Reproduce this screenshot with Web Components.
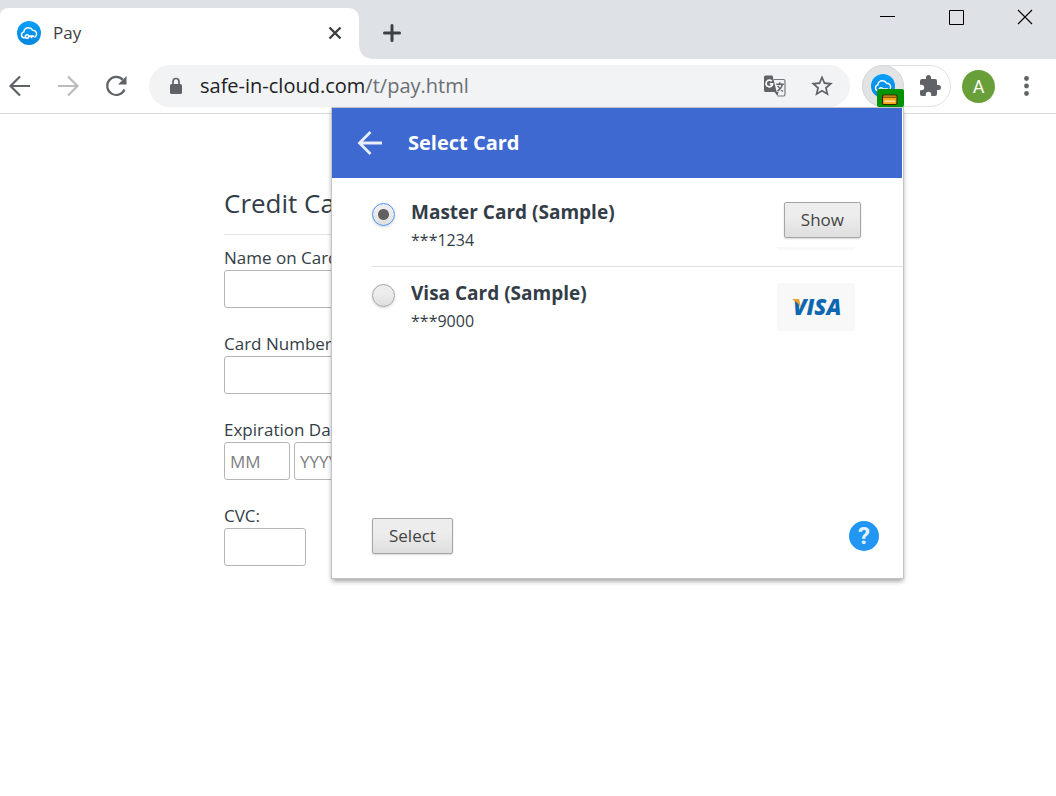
<!DOCTYPE html>
<html lang="en">
<head>
<meta charset="utf-8">
<title>Pay</title>
<style>
  body {
    margin: 0;
    background: #fff;
    color: #333d47;
    font-family: "Open Sans", "Noto Sans", sans-serif;
  }
</style>
</head>
<body>
<browser-window>
  <tab-strip slot="tabs" label="Pay"></tab-strip>
  <tool-bar slot="toolbar" host="safe-in-cloud.com" path="/t/pay.html"></tool-bar>
  <pay-form></pay-form>
  <card-popup slot="popup" heading="Select Card">
    <card-item name="Master Card (Sample)" number="***1234" active></card-item>
    <card-item name="Visa Card (Sample)" number="***9000" brand="visa"></card-item>
  </card-popup>
</browser-window>

<script>
const BASE = `
  * {
    box-sizing: border-box;
    margin: 0;
  }

  svg {
    display: block;
    flex: none;
  }

  button {
    padding: 0;
    border: none;
    background: none;
    color: inherit;
    font: inherit;
  }
`;

class BrowserWindow extends HTMLElement {
  constructor() {
    super();
    this.attachShadow({ mode: 'open' });
  }

  connectedCallback() {
    this.shadowRoot.innerHTML = `
      <style>
        ${BASE}
        :host {
          display: flex;
          flex-direction: column;
          position: relative;
          min-height: 100vh;
        }

        main {
          flex: 1;
        }

        slot[name="popup"]::slotted(*) {
          position: absolute;
          top: 108px;
          right: 153px;
        }
      </style>

      <slot name="tabs"></slot>
      <slot name="toolbar"></slot>
      <main><slot></slot></main>
      <slot name="popup"></slot>
    `;
  }
}

class CloudLogo extends HTMLElement {
  constructor() {
    super();
    this.attachShadow({ mode: 'open' });
  }

  connectedCallback() {
    this.shadowRoot.innerHTML = `
      <style>
        ${BASE}
        :host {
          display: block;
          width: 24px;
          height: 24px;
          flex: none;
        }
      </style>

      <svg width="24" height="24" viewBox="0 0 24 24" fill="none" stroke="#fff" stroke-linecap="round">
        <defs>
          <linearGradient id="sky" x2="0" y2="1">
            <stop stop-color="#08a0fa"/>
            <stop offset="1" stop-color="#0585dc"/>
          </linearGradient>
        </defs>
        <circle cx="12" cy="12" r="12" fill="url(#sky)" stroke="none"/>
        <path stroke-width="1.4" d="M7.200 16.800C5.600 16.600 4.500 15.400 4.500 13.900s1-2.700 2.400-3C7 8.400 9 6.700 11.300 6.700c1.900 0 3.500 1 4.200 2.600 2.400-.1 4.100 1.500 4.100 3.700 0 1.500-.7 2.600-1.700 3.200"/>
        <circle cx="10" cy="15.500" r="1.700" stroke-width="1.600"/>
        <path stroke-width="1.800" d="M12 15.200h4.500M14.500 15.600v.8"/>
      </svg>
    `;
  }
}

class TabStrip extends HTMLElement {
  constructor() {
    super();
    this.attachShadow({ mode: 'open' });
  }

  connectedCallback() {
    this.shadowRoot.innerHTML = `
      <style>
        ${BASE}
        :host {
          display: flex;
          justify-content: space-between;
          height: 59px;
          background: #dee1e6;
        }

        .tabs {
          display: flex;
          align-items: flex-end;
        }

        .tab {
          display: flex;
          align-items: center;
          gap: 12px;
          position: relative;
          width: 359px;
          height: 51px;
          padding: 0 15px 2px 17px;
          border-radius: 8px 10px 0 0;
          background: #fff;
        }

        .tab::after {
          content: "";
          position: absolute;
          left: 100%;
          bottom: 0;
          width: 12px;
          height: 12px;
          background: radial-gradient(circle at 100% 0, #dee1e6 11px, #fff 12px);
        }

        .title {
          flex: 1;
          color: #3c4043;
          font-size: 17px;
          line-height: 24px;
        }

        .add {
          margin: 0 0 14px 21px;
        }

        .window {
          display: flex;
          gap: 45px;
          padding: 5px 18px 0 0;
          align-items: flex-start;
        }
      </style>

      <div class="tabs">
        <div class="tab">
          <cloud-logo></cloud-logo>
          <span class="title">${this.getAttribute('label')}</span>
          <button aria-label="Close tab">
            <svg width="18" height="18" viewBox="0 0 18 18" stroke="#3c4043" stroke-width="2.400"><path d="M3.500 3.500l11 11M14.500 3.500l-11 11"/></svg>
          </button>
        </div>
        <button class="add" aria-label="New tab">
          <svg width="24" height="24" viewBox="0 0 24 24" stroke="#3c4043" stroke-width="3" stroke-linecap="round"><path d="M4.500 12h15M12 4.500v15"/></svg>
        </button>
      </div>
      <div class="window">
        <button aria-label="Minimize">
          <svg width="24" height="24" viewBox="0 0 24 24" stroke="#000"><path d="M4 11.500h15"/></svg>
        </button>
        <button aria-label="Maximize">
          <svg width="24" height="24" viewBox="0 0 24 24" fill="none" stroke="#000"><path d="M4.500 5.500h14v14h-14z"/></svg>
        </button>
        <button aria-label="Close">
          <svg width="24" height="24" viewBox="0 0 24 24" stroke="#000" stroke-width="1.100"><path d="M4 5l14 14M18 5l-14 14"/></svg>
        </button>
      </div>
    `;
  }
}

class ToolBar extends HTMLElement {
  constructor() {
    super();
    this.attachShadow({ mode: 'open' });
  }

  connectedCallback() {
    this.shadowRoot.innerHTML = `
      <style>
        ${BASE}
        :host {
          display: flex;
          align-items: center;
          box-sizing: border-box;
          height: 55px;
          padding: 0 18px 0 5px;
          border-bottom: 1px solid #d9dadc;
          background: #fff;
          color: #5f6368;
        }

        .nav {
          display: flex;
          gap: 18px;
          margin-right: 18px;
        }

        .nav [disabled] {
          color: #bbbcbe;
        }

        .address {
          display: flex;
          align-items: center;
          flex: 1;
          height: 42px;
          padding: 0 15px 0 20px;
          border-radius: 21px;
          background: #f1f3f4;
        }

        .url {
          flex: 1;
          margin-left: 17px;
          color: #6b6f74;
          font-size: 20px;
          line-height: 28px;
        }

        .url b {
          color: #202124;
          font-weight: 400;
        }

        .address button {
          margin-left: 22px;
        }

        .extensions {
          display: flex;
          align-items: center;
          gap: 14px;
          width: 89px;
          height: 42px;
          margin: 0 11px 0 12px;
          border: 1px solid #dfe1e4;
          border-radius: 21px;
        }

        .vault {
          display: grid;
          place-items: center;
          position: relative;
          width: 42px;
          height: 42px;
          margin-left: -1px;
          border: 1px solid #d6d7d9;
          border-radius: 50%;
          background: #e2e3e4;
        }

        .badge {
          position: absolute;
          right: -1px;
          bottom: -1px;
          border-radius: 2px;
        }

        .avatar {
          width: 33px;
          height: 33px;
          margin-right: 19px;
          border-radius: 50%;
          background: #689f38;
          color: #fff;
          font: 18px/33px Roboto, sans-serif;
        }
      </style>

      <div class="nav">
        <button aria-label="Back">
          <svg width="30" height="30" viewBox="0 0 30 30" fill="none" stroke="currentColor" stroke-width="2.200"><path d="M25 15H7M15 5.500L5.500 15l9.500 9.500"/></svg>
        </button>
        <button aria-label="Forward" disabled>
          <svg width="30" height="30" viewBox="0 0 30 30" fill="none" stroke="currentColor" stroke-width="2.200"><path d="M5 15h18M15 5.500l9.500 9.500-9.500 9.500"/></svg>
        </button>
        <button aria-label="Reload">
          <svg width="30" height="30" viewBox="0 0 30 30" fill="currentColor"><path d="M23.500 18.500A9 9 0 1 1 21.800 8.800" fill="none" stroke="currentColor" stroke-width="2.200"/><path d="M25.500 5v8.500H17z"/></svg>
        </button>
      </div>

      <div class="address">
        <svg width="14" height="18" viewBox="0 0 14 18" fill="#5f6368"><rect x="1" y="7" width="12" height="10" rx="1.500"/><path d="M4 8V4.500a3 3 0 0 1 6 0V8" fill="none" stroke="#5f6368" stroke-width="1.700"/></svg>
        <span class="url"><b>${this.getAttribute('host')}</b>${this.getAttribute('path')}</span>
        <button aria-label="Translate">
          <svg width="24" height="24" viewBox="0 0 24 24" fill="none">
            <path d="M11 5.500h9.500a1.500 1.500 0 0 1 1.500 1.500V20.500a1.500 1.500 0 0 1-1.500 1.500H14.500" stroke="#75797d" stroke-width="1.200"/>
            <path d="M2.500 1.500h7l4.200 16.500H2.500A1.500 1.500 0 0 1 1 16.500V3A1.500 1.500 0 0 1 2.500 1.500z" fill="#5f6368"/>
            <path d="M11.500 18l3 4 1-4z" fill="#5f6368"/>
            <path d="M8.800 7.300A3.300 3.300 0 1 0 9.600 9.800H6.800" stroke="#fff" stroke-width="1.700"/>
            <path d="M13.300 10.200h7.500M16.800 8.300v1.900M19.500 10.200c-.7 3-2.700 5.500-5 7M14.800 11.800c1 2 2.800 4.200 5.200 5.700" stroke="#5f6368" stroke-width="1.400"/>
          </svg>
        </button>
        <button aria-label="Bookmark">
          <svg width="26" height="26" viewBox="0 0 24 24" fill="currentColor"><path d="M22 9.240l-7.190-.62L12 2 9.190 8.630 2 9.240l5.460 4.730L5.820 21 12 17.270 18.180 21l-1.630-7.030L22 9.240zM12 15.400l-3.760 2.270 1-4.280-3.320-2.880 4.380-.38L12 6.100l1.710 4.040 4.380.38-3.320 2.880 1 4.280L12 15.400z"/></svg>
        </button>
      </div>

      <div class="extensions">
        <button class="vault" aria-label="Password manager">
          <cloud-logo></cloud-logo>
          <svg class="badge" width="27" height="18" viewBox="0 0 27 18">
            <path fill="#019301" d="M0 0h27v18H0z"/>
            <rect x="5.500" y="6" width="14.500" height="9.500" rx="1.500" fill="#f7a81b" stroke="#362406" stroke-width="1.200"/>
            <path fill="#8a5a10" d="M6 7.500h13.500v1.500H6z"/>
            <path fill="#fde4ab" d="M7.500 11.500h10.500v1.500H7.500z"/>
          </svg>
        </button>
        <button aria-label="Extensions">
          <svg width="24" height="24" viewBox="0 0 24 24" fill="currentColor"><path d="M20.500 11H19V7a2 2 0 0 0-2-2h-4V3.500a2.500 2.500 0 0 0-5 0V5H4a2 2 0 0 0-2 2v3.800h1.500a2.700 2.700 0 0 1 0 5.400H2V20a2 2 0 0 0 2 2h3.800v-1.500a2.700 2.700 0 0 1 5.400 0V22H17a2 2 0 0 0 2-2v-4h1.500a2.500 2.500 0 0 0 0-5z"/></svg>
        </button>
      </div>

      <button class="avatar" aria-label="Account">A</button>
      <button aria-label="Menu">
        <svg width="24" height="24" viewBox="0 0 24 24" fill="currentColor"><circle cx="12.500" cy="4.500" r="2.400"/><circle cx="12.500" cy="12" r="2.400"/><circle cx="12.500" cy="19.500" r="2.400"/></svg>
      </button>
    `;
  }
}

class PayForm extends HTMLElement {
  constructor() {
    super();
    this.attachShadow({ mode: 'open' });
  }

  connectedCallback() {
    this.shadowRoot.innerHTML = `
      <style>
        ${BASE}
        :host {
          display: block;
          max-width: 608px;
          margin: 70px auto 0;
        }

        h1 {
          padding-bottom: 12px;
          border-bottom: 1px solid #e3e3e3;
          font-size: 26px;
          font-weight: 400;
          line-height: 38px;
        }

        form {
          display: grid;
          gap: 24px;
          padding-top: 11px;
        }

        label {
          display: block;
          font-size: 17px;
          line-height: 24px;
        }

        input {
          display: block;
          width: 100%;
          height: 38px;
          padding: 0 5px;
          border: 1px solid #b5b5b5;
          border-radius: 3px;
          background: #fff;
          font: 17px/24px "Open Sans", "Noto Sans", sans-serif;
        }

        input::placeholder {
          color: #808080;
        }

        .date {
          display: flex;
          gap: 4px;
        }

        .date input {
          width: 66px;
        }

        #cvc {
          width: 82px;
        }
      </style>

      <h1>Credit Card</h1>
      <form>
        <div>
          <label for="name">Name on Card:</label>
          <input id="name" type="text">
        </div>
        <div>
          <label for="number">Card Number:</label>
          <input id="number" type="text">
        </div>
        <div>
          <label for="month">Expiration Date:</label>
          <div class="date">
            <input id="month" type="text" placeholder="MM">
            <input type="text" placeholder="YYYY" aria-label="Expiration year">
          </div>
        </div>
        <div>
          <label for="cvc">CVC:</label>
          <input id="cvc" type="text">
        </div>
      </form>
    `;
  }
}

class PushButton extends HTMLElement {
  constructor() {
    super();
    this.attachShadow({ mode: 'open' });
  }

  connectedCallback() {
    this.shadowRoot.innerHTML = `
      <style>
        ${BASE}
        :host {
          display: inline-block;
        }

        button {
          display: block;
          height: 36px;
          padding: 0 16px;
          border: 1px solid #a5a5a5;
          border-radius: 2px;
          background: linear-gradient(#ededed 38%, #dedede);
          box-shadow: 0 1px 2px rgba(0, 0, 0, 0.16);
          color: #444;
          font-size: 17px;
          line-height: 24px;
        }
      </style>

      <button type="button"><slot></slot></button>
    `;
  }
}

class CardItem extends HTMLElement {
  constructor() {
    super();
    this.attachShadow({ mode: 'open' });
  }

  get thumb() {
    if (this.getAttribute('brand') !== 'visa') {
      return '<div class="cover"><push-button>Show</push-button></div>';
    }
    return `
      <svg width="78" height="48" viewBox="0 0 78 48">
        <text x="16" y="32" fill="#0c67b0" font-size="22" font-weight="800" font-style="italic">VISA</text>
        <path fill="#f0a030" d="M15.500 16h6.500l2.200 9.500c-1.700-4-4.700-7-8.700-8.700z"/>
      </svg>
    `;
  }

  connectedCallback() {
    const active = this.hasAttribute('active');

    this.shadowRoot.innerHTML = `
      <style>
        ${BASE}
        :host {
          display: flex;
          align-items: flex-start;
          padding: 14px 48px 14px 0;
        }

        :host([active]) {
          padding-top: 22px;
          border-bottom: 1px solid #dfdfdf;
        }

        input {
          appearance: none;
          width: 23px;
          height: 23px;
          margin: 3px 16px 0 0;
          border: 1px solid #a5a5a5;
          border-radius: 50%;
          background: linear-gradient(#ededed 38%, #dedede);
          box-shadow: 0 1px 2px rgba(0, 0, 0, 0.16);
        }

        input:checked {
          border-color: #4d90fe;
          background: radial-gradient(circle, #616161 5px, transparent 6px), linear-gradient(#ededed 38%, #dedede);
        }

        label {
          flex: 1;
        }

        .name {
          display: block;
          font-size: 19px;
          font-weight: 700;
          line-height: 24px;
        }

        .number {
          display: block;
          padding-top: 4px;
          font-size: 16px;
          line-height: 24px;
        }

        .thumb {
          position: relative;
          width: 78px;
          height: 48px;
          margin-top: 2px;
          border-radius: 2px;
          background: #f8f8f8;
        }

        .cover {
          position: absolute;
          top: 0;
          right: -6px;
          display: flex;
          justify-content: flex-end;
          width: 84px;
          height: 45px;
          background: #fff;
        }
      </style>

      <input id="pick" type="radio" name="card" ${active ? 'checked' : ''}>
      <label for="pick">
        <span class="name">${this.getAttribute('name')}</span>
        <span class="number">${this.getAttribute('number')}</span>
      </label>
      <div class="thumb">${this.thumb}</div>
    `;
  }
}

class CardPopup extends HTMLElement {
  constructor() {
    super();
    this.attachShadow({ mode: 'open' });
  }

  connectedCallback() {
    this.shadowRoot.innerHTML = `
      <style>
        ${BASE}
        :host {
          display: block;
          width: 571px;
          background: #fff;
          box-shadow: 0 0 0 1px #c4c4c4, 0 3px 5px rgba(0, 0, 0, 0.4);
        }

        header {
          display: flex;
          align-items: center;
          gap: 20px;
          height: 70px;
          padding: 0 20px;
          margin-right: 1px;
          background: #3e69d1;
          color: #fff;
        }

        h2 {
          font-size: 20px;
          font-weight: 700;
          line-height: 28px;
        }

        .list {
          min-height: 340px;
          padding-left: 40px;
        }

        footer {
          display: flex;
          align-items: center;
          justify-content: space-between;
          padding: 0 24px 24px 40px;
        }

        .help {
          width: 30px;
          height: 30px;
          border-radius: 50%;
          background: #2196f3;
          color: #e4f3fe;
          font: 700 24px/30px Roboto, sans-serif;
        }
      </style>

      <header>
        <button aria-label="Back">
          <svg width="36" height="36" viewBox="0 0 36 36" fill="none" stroke="#e8eefc" stroke-width="2.800"><path d="M30 18H8M18.500 7L7.500 18l11 11"/></svg>
        </button>
        <h2>${this.getAttribute('heading')}</h2>
      </header>
      <div class="list"><slot></slot></div>
      <footer>
        <push-button>Select</push-button>
        <button class="help" aria-label="Help">?</button>
      </footer>
    `;
  }
}

customElements.define('cloud-logo', CloudLogo);
customElements.define('push-button', PushButton);
customElements.define('tab-strip', TabStrip);
customElements.define('tool-bar', ToolBar);
customElements.define('pay-form', PayForm);
customElements.define('card-item', CardItem);
customElements.define('card-popup', CardPopup);
customElements.define('browser-window', BrowserWindow);
</script>
</body>
</html>
